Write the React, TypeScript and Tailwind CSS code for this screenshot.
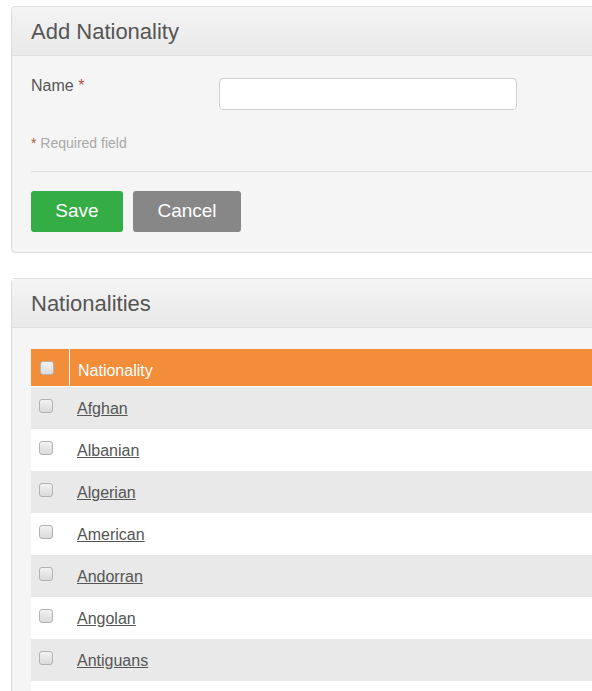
const nationalities = [
  "Afghan",
  "Albanian",
  "Algerian",
  "American",
  "Andorran",
  "Angolan",
  "Antiguans",
  "Argentinean",
  "Armenian",
];

function Box() {
  return (
    <span className="block h-[14px] w-[14px] rounded-[3px] border border-[#b3b3b3] bg-gradient-to-b from-[#f2f2f2] to-[#dadada]" />
  );
}

function PanelHeader({ title }: { title: string }) {
  return (
    <div className="flex h-[49px] items-center border-b border-[#dedede] bg-gradient-to-b from-[#f4f4f4] to-[#e9e9e9] pl-[19px] pt-[2px]">
      <h1 className="text-[22px] leading-none text-[#555]">{title}</h1>
    </div>
  );
}

export default function App() {
  return (
    <div className="h-screen w-screen overflow-hidden bg-white font-['Liberation_Sans',Arial,sans-serif]">
      <div className="ml-[11px] mt-[6px] w-[640px] overflow-hidden rounded-[4px] border border-[#dcdcdc] bg-[#f5f5f5]">
        <PanelHeader title="Add Nationality" />
        <div className="px-[19px] pb-[20px] pt-[22px]">
          <div className="flex items-start">
            <label className="w-[188px] text-[16px] leading-4 text-[#555]">
              Name <span className="text-[#b5533c]">*</span>
            </label>
            <input className="h-[32px] w-[298px] rounded-[4px] border border-[#cfcfcf] bg-white px-2 text-[15px] outline-none" />
          </div>
          <p className="mt-[23px] text-[14px] text-[#a9a9a9]">
            <span className="text-[#b5533c]">*</span> Required field
          </p>
          <div className="mt-[17px] border-t border-[#dcdcdc]" />
          <div className="mt-[19px] flex gap-[10px]">
            <button className="h-[41px] w-[92px] rounded-[3px] bg-[#33ad44] text-[19px] text-white">Save</button>
            <button className="h-[41px] w-[108px] rounded-[3px] bg-[#878787] text-[19px] text-white">Cancel</button>
          </div>
        </div>
      </div>

      <div className="ml-[11px] mt-[25px] w-[640px] rounded-t-[4px] border border-[#dcdcdc] bg-[#f5f5f5]">
        <PanelHeader title="Nationalities" />
        <div className="px-[19px] pt-[21px]">
          <div className="flex h-[37px] bg-[#f28d3a] text-[16px] text-white">
            <div className="flex w-[39px] items-center border-r border-white pl-[9px]">
              <Box />
            </div>
            <div className="flex items-center pl-[8px] pt-[6px]">Nationality</div>
          </div>
          <div className="border-t border-white">
            {nationalities.map((n, i) => (
              <div key={n} className={`flex h-[42px] ${i % 2 === 0 ? "bg-[#e9e9e9]" : "bg-white"}`}>
                <div className="w-[39px] pl-[8px] pt-[12px]">
                  <Box />
                </div>
                <div className="flex items-center pl-[7px] pt-[2px] text-[16px]">
                  <a href="#" className="text-[#555] underline">{n}</a>
                </div>
              </div>
            ))}
          </div>
        </div>
      </div>
    </div>
  );
}
